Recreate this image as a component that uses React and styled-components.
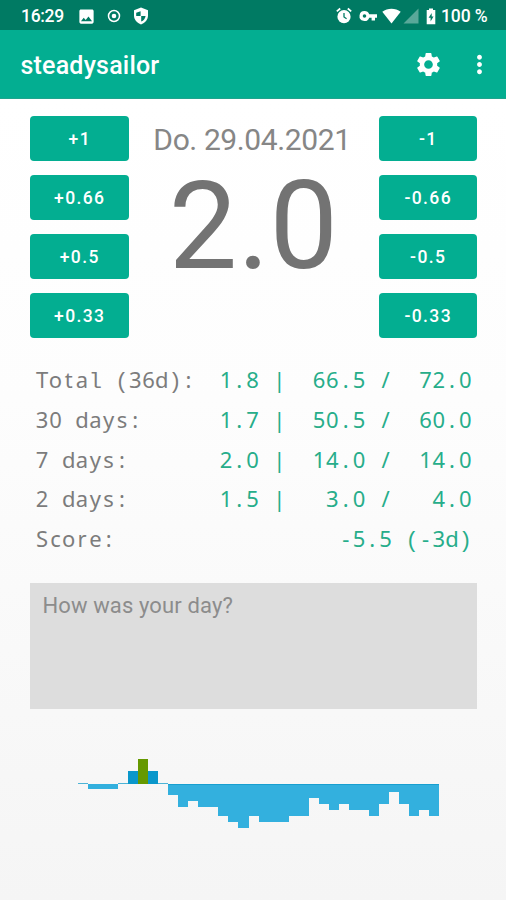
import React from 'react';
import styled, { createGlobalStyle } from 'styled-components';
import { MdImage, MdSettings, MdMoreVert } from 'react-icons/md';

const GlobalStyle = createGlobalStyle`
  * {
    box-sizing: border-box;
  }

  body {
    margin: 0;
    font-family: Roboto, sans-serif;
  }
`;

const Screen = styled.div`
  display: flex;
  flex-direction: column;
  width: 506px;
  height: 900px;
  overflow: hidden;
  background: linear-gradient(#ffffff 100px, #fdfdfd 400px, #f5f5f5 900px);
`;

const StatusBar = styled.div`
  display: flex;
  align-items: center;
  height: 30px;
  padding: 2px 18px 0 21px;
  background-color: #007a63;
  color: white;
  font-size: 17.5px;
  font-weight: 500;
`;

const Clock = styled.span`
  width: 56px;
  letter-spacing: -0.3px;
`;

const Notifications = styled.div`
  display: flex;
  align-items: center;
  gap: 10px;
  flex: 1;
`;

const Indicators = styled.div`
  display: flex;
  align-items: center;
`;

const Battery = styled.span`
  width: 47px;
  margin-left: 5px;
  letter-spacing: -0.1px;
  white-space: nowrap;
`;

const AppBar = styled.header`
  display: flex;
  align-items: center;
  height: 69px;
  padding: 0 12px 0 20.5px;
  background-color: #03ae91;
  border-bottom: 1px solid #1fa48d;
  color: white;
`;

const AppTitle = styled.h1`
  flex: 1;
  margin: 3px 0 0;
  font-size: 25px;
  font-weight: 500;
  letter-spacing: 0.2px;
`;

const IconButton = styled.button`
  display: flex;
  padding: 0;
  margin-left: ${({ $gap }) => $gap || 0}px;
  border: 0;
  background: none;
  color: white;
`;

const Tracker = styled.section`
  display: grid;
  grid-template-columns: 98.5px 1fr 98.5px;
  padding: 17px 29px 0 30px;
`;

const ButtonColumn = styled.div`
  display: flex;
  flex-direction: column;
  gap: 14.5px;
`;

const StepButton = styled.button`
  height: 44.5px;
  padding: 1px 0 0 1px;
  border: 0;
  border-radius: 4px;
  background-color: #03ae91;
  color: white;
  font-family: inherit;
  font-size: 17.5px;
  font-weight: 500;
  letter-spacing: 1.4px;
`;

const Today = styled.div`
  display: flex;
  flex-direction: column;
  align-items: center;
  padding-top: 6px;
  white-space: nowrap;
`;

const TodayDate = styled.div`
  margin-right: 3px;
  font-size: 30px;
  letter-spacing: -0.4px;
  line-height: 36px;
  color: #868686;
`;

const TodayValue = styled.div`
  margin-top: -1px;
  font-size: 122px;
  line-height: 140px;
  color: #737373;
`;

const Stats = styled.section`
  display: flex;
  flex-direction: column;
  padding: 22.5px 34px 0 35.5px;
`;

const StatRow = styled.div`
  display: flex;
  justify-content: space-between;
  height: 39.75px;
  line-height: 39.75px;
  font-family: 'Noto Sans', sans-serif;
  font-size: 22px;
`;

const StatText = styled.span`
  display: flex;
  align-items: baseline;
  color: ${({ $accent }) => ($accent ? '#27ad8a' : '#7c7c7c')};
`;

const Cell = styled.span`
  display: flex;
  justify-content: center;
  width: 13.3px;
  font-family: ${({ $slab }) => ($slab ? "'Liberation Mono', monospace" : 'inherit')};
  white-space: pre;
`;

const Note = styled.textarea`
  display: block;
  height: 126px;
  margin: 24.5px 29px 0 30px;
  padding: 10px 12.5px;
  border: 0;
  background-color: #dddddd;
  font-family: inherit;
  font-size: 22px;
  letter-spacing: 0.12px;
  line-height: 26px;
  resize: none;

  &::placeholder {
    color: #8c8c8c;
    opacity: 1;
  }
`;

const Chart = styled.svg`
  display: block;
  width: 361px;
  height: 80px;
  margin: 45px 0 0 78px;
  shape-rendering: crispEdges;
`;

const steps = ['1', '0.66', '0.5', '0.33'];

const stats = [
  ['Total (36d):', '1.8 |  66.5 /  72.0'],
  ['30 days:', '1.7 |  50.5 /  60.0'],
  ['7 days:', '2.0 |  14.0 /  14.0'],
  ['2 days:', '1.5 |   3.0 /   4.0'],
  ['Score:', '-5.5 (-3d)'],
];

const history = [
  0, -5, -5, -5, 0, 13, 25, 13, 0, -11, -23, -17, -23, -23, -32, -38, -44, -32,
  -38, -38, -38, -32, -32, -14, -20, -26, -20, -26, -26, -32, -20, -8, -20, -32, -26, -32,
];

const MonoText = ({ text, accent }) => (
  <StatText $accent={accent}>
    {text.split('').map((char, i) => (
      <Cell key={i} $slab={'l()'.includes(char)}>{char}</Cell>
    ))}
  </StatText>
);

const RecordIcon = () => (
  <svg width="16" height="16" viewBox="0 0 16 16" fill="none">
    <circle cx="8" cy="8" r="5.5" stroke="white" strokeWidth="1.5" />
    <circle cx="8" cy="8" r="2.3" fill="white" />
  </svg>
);

const ShieldIcon = () => (
  <svg width="18" height="18" viewBox="0 0 18 18">
    <path d="M9 0.5 L16 3.2 V8.5 C16 12.7 13 16 9 17.5 C5 16 2 12.7 2 8.5 V3.2 Z" fill="white" />
    <path d="M8.6 4.2 V9 H4.2 V5.8 Z M9.2 9 H13.6 C13.3 11.6 11.5 13.6 9.2 14.6 Z" fill="#007a63" />
  </svg>
);

const AlarmIcon = () => (
  <svg width="16" height="18" viewBox="0 0 16 18" fill="none">
    <circle cx="8" cy="9.7" r="6.6" fill="white" />
    <path d="M0.8 4.4 L4.2 1.5 M15.2 4.4 L11.8 1.5" stroke="white" strokeWidth="1.8" />
    <path d="M8 6 V10 L10.6 11.7" stroke="#007a63" strokeWidth="1.3" />
  </svg>
);

const KeyIcon = () => (
  <svg width="19" height="12" viewBox="0 0 19 12">
    <path
      fillRule="evenodd"
      d="M5.5 1 A5 5 0 1 0 10.2 7.7 H12.6 V10.6 H16 V7.7 H18 V4.3 H10.2 A5 5 0 0 0 5.5 1 Z M5.5 4.2 A1.8 1.8 0 1 1 5.5 7.8 A1.8 1.8 0 0 1 5.5 4.2 Z"
      fill="white"
    />
  </svg>
);

const WifiIcon = () => (
  <svg width="19" height="16" viewBox="0 0 19 16">
    <path d="M9.5 15.5 L0.3 3.8 C5.5 -0.4 13.5 -0.4 18.7 3.8 Z" fill="white" />
  </svg>
);

const SignalIcon = () => (
  <svg width="16" height="16" viewBox="0 0 16 16">
    <path d="M15.5 0.5 V15.5 H0.5 Z" fill="white" fillOpacity="0.35" />
  </svg>
);

const BatteryIcon = () => (
  <svg width="10" height="17" viewBox="0 0 10 17">
    <path d="M3 0.5 H7 V2 H9.3 V16.3 H0.7 V2 H3 Z" fill="white" />
    <path d="M5.7 5 L2.6 9.8 H4.6 V13.4 L7.5 8.6 H5.7 Z" fill="#007a63" />
  </svg>
);

const IconSlot = styled.span`
  display: flex;
  margin-right: ${({ $gap }) => $gap}px;
`;

const barColor = (value) => {
  if (value === 25) return '#669900';
  return value > 0 ? '#0a97cb' : '#33b0de';
};

const HistoryChart = () => (
  <Chart viewBox="0 0 361 80">
    {history.map((value, i) => {
      const x = i * 10.03;
      if (value === 0) {
        return <rect key={i} x={x} y="29" width="10.03" height="1" fill="#4db4d6" />;
      }
      return (
        <rect
          key={i}
          x={x}
          y={value > 0 ? 30 - value : 30}
          width="10.03"
          height={Math.abs(value)}
          fill={barColor(value)}
        />
      );
    })}
    <rect x="90.3" y="30" width="270.7" height="1" fill="#189fd0" />
  </Chart>
);

const App = () => {
  return (
    <>
      <GlobalStyle />
      <Screen>
        <StatusBar>
          <Clock>16:29</Clock>
          <Notifications>
            <MdImage size={19} />
            <RecordIcon />
            <ShieldIcon />
          </Notifications>
          <Indicators>
            <IconSlot $gap={7}><AlarmIcon /></IconSlot>
            <IconSlot $gap={4}><KeyIcon /></IconSlot>
            <IconSlot $gap={2}><WifiIcon /></IconSlot>
            <IconSlot $gap={7}><SignalIcon /></IconSlot>
            <BatteryIcon />
            <Battery>100 %</Battery>
          </Indicators>
        </StatusBar>

        <AppBar>
          <AppTitle>steadysailor</AppTitle>
          <IconButton aria-label="Settings">
            <MdSettings size={29} />
          </IconButton>
          <IconButton aria-label="More" $gap={22}>
            <MdMoreVert size={29} />
          </IconButton>
        </AppBar>

        <Tracker>
          <ButtonColumn>
            {steps.map((step) => (
              <StepButton key={step}>+{step}</StepButton>
            ))}
          </ButtonColumn>
          <Today>
            <TodayDate>Do. 29.04.2021</TodayDate>
            <TodayValue>2.0</TodayValue>
          </Today>
          <ButtonColumn>
            {steps.map((step) => (
              <StepButton key={step}>-{step}</StepButton>
            ))}
          </ButtonColumn>
        </Tracker>

        <Stats>
          {stats.map(([label, value]) => (
            <StatRow key={label}>
              <MonoText text={label} />
              <MonoText text={value} accent />
            </StatRow>
          ))}
        </Stats>

        <Note placeholder="How was your day?" />
        <HistoryChart />
      </Screen>
    </>
  );
};

export default App;
